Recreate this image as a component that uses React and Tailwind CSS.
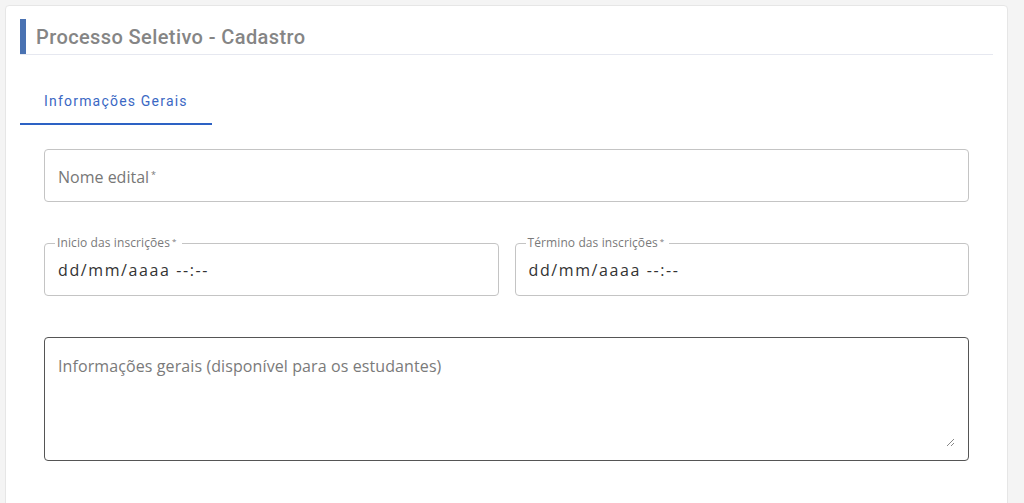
import React from "react";

const bodyFont = { fontFamily: '"Open Sans", "Liberation Sans", sans-serif' };

// Campo com legenda sobre a borda
function DateField({ label }) {
  return (
    <fieldset className="relative h-[59px] rounded border border-[#c4c4c4] px-[13px] pt-0 m-0 min-w-0">
      <legend className="-ml-[3px] pl-[2px] pr-[5px] text-[12px] leading-[12px] text-[#7a7a7a] tracking-[0.1px]">
        {label}<span className="relative -top-[3px] text-[8px] ml-[2px]">*</span>
      </legend>
      <div className="pt-[8px] text-[16px] text-[#333] tracking-[1.6px]">dd/mm/aaaa --:--</div>
    </fieldset>
  );
}

export default function App() {
  return (
    <div className="min-h-[503px] bg-[#f4f4f4] pl-[5px] pt-[5px] pr-[16px] overflow-hidden" style={bodyFont}>
      <div className="bg-white border border-[#e6e6e6] rounded-[4px] h-[520px] px-[14px] pt-[13px]">
        {/* Cabeçalho */}
        <div className="flex items-stretch h-[36px] border-b border-[#e6e8f0]">
          <div className="w-[6px] bg-[#4a72b2]" />
          <h1 className="pl-[10px] flex items-center text-[20px] font-medium text-[#858585] font-['Roboto',sans-serif] tracking-[0.4px]">
            Processo Seletivo - Cadastro
          </h1>
        </div>

        {/* Abas */}
        <div className="flex mt-[25px]">
          <div className="w-[192px] h-[45px] border-b-2 border-[#2d62c4] flex items-center pl-[24px] pb-[1px]">
            <span className="whitespace-nowrap text-[14px] text-[#3b68c4] tracking-[1.2px] font-['Roboto',sans-serif]">Informações Gerais</span>
          </div>
        </div>

        {/* Formulário */}
        <div className="px-[24px] pt-[24px] flex flex-col">
          <div className="h-[53px] rounded border border-[#c4c4c4] flex items-center px-[13px] pt-[2px]">
            <span className="text-[16px] text-[#777]">Nome edital<span className="relative -top-[5px] text-[9px] ml-[2px]">*</span></span>
          </div>

          <div className="grid grid-cols-2 gap-[16px] mt-[35px]">
            <DateField label="Inicio das inscrições" />
            <DateField label="Término das inscrições" />
          </div>

          <div className="relative mt-[41px] h-[124px] rounded border border-[#555] px-[13px] pt-[16px]">
            <span className="text-[16px] text-[#7a7a7a] tracking-[0.1px]">Informações gerais (disponível para os estudantes)</span>
            <svg className="absolute right-[13px] bottom-[13px]" width="9" height="9" viewBox="0 0 9 9">
              <path d="M1 8 L8 1 M5 8 L8 5" stroke="#888" strokeWidth="1" />
            </svg>
          </div>
        </div>
      </div>
    </div>
  );
}
